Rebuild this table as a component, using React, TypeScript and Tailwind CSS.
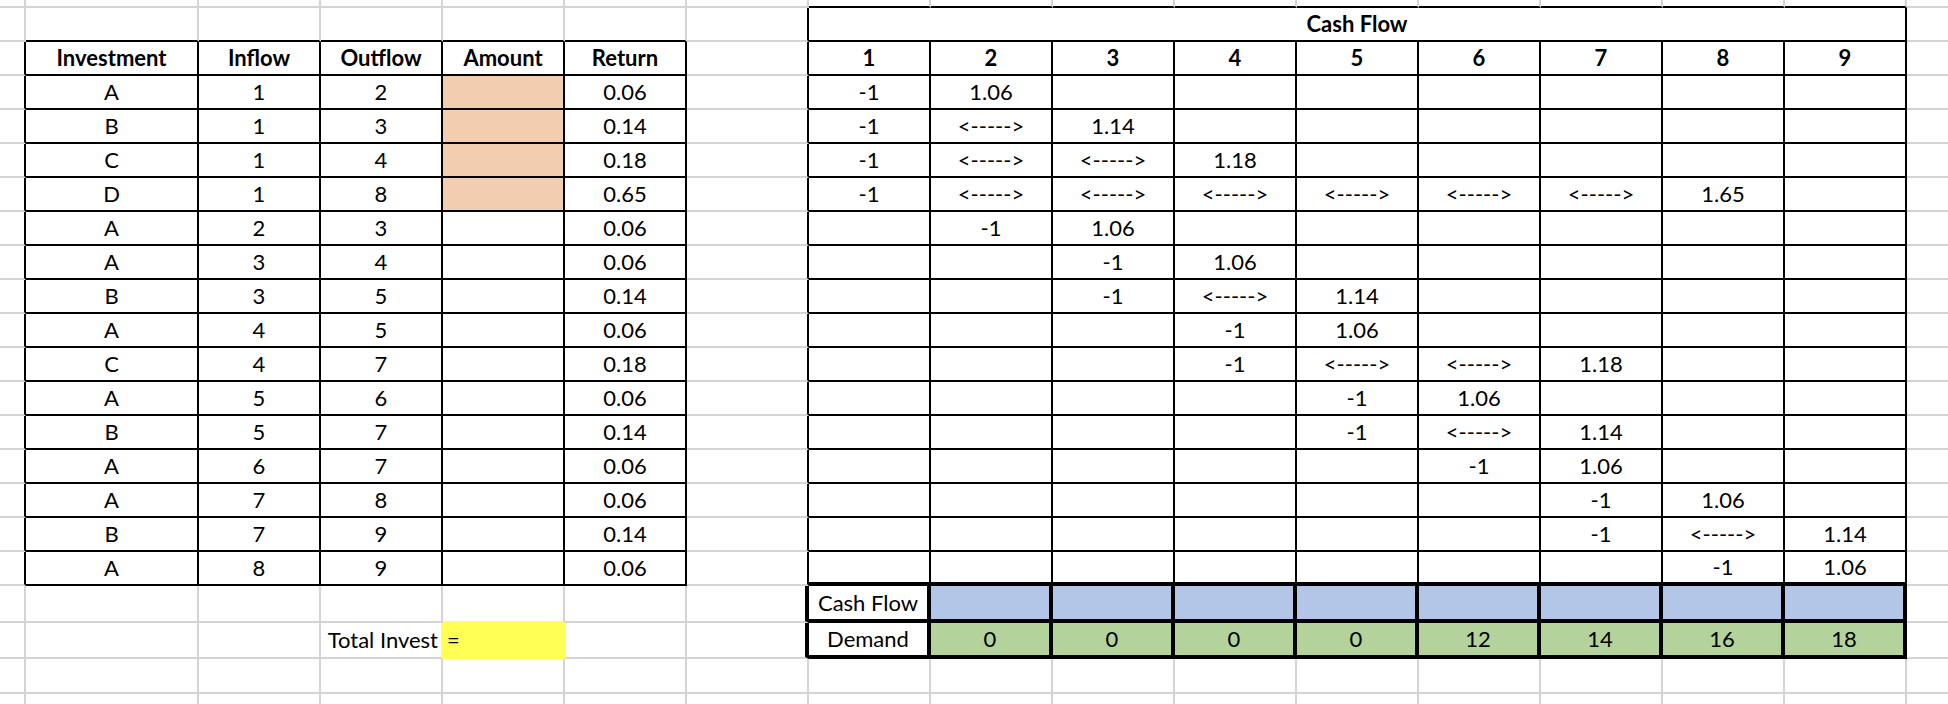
import React from "react"

type Line = "g" | "k" | "K" | "y" | "n"

const RIGHT: Record<Line, string> = {
  g: "border-r-2 border-r-[#d4d4d4]",
  k: "border-r-2 border-r-black",
  K: "border-r-4 border-r-black",
  y: "border-r-2 border-r-[#ffff55]",
  n: "",
}

const BOTTOM: Record<Line, string> = {
  g: "border-b-2 border-b-[#d4d4d4]",
  k: "border-b-2 border-b-black",
  K: "border-b-4 border-b-black",
  y: "border-b-2 border-b-[#ffff55]",
  n: "",
}

const investments: [string, number, number, string][] = [
  ["A", 1, 2, "0.06"],
  ["B", 1, 3, "0.14"],
  ["C", 1, 4, "0.18"],
  ["D", 1, 8, "0.65"],
  ["A", 2, 3, "0.06"],
  ["A", 3, 4, "0.06"],
  ["B", 3, 5, "0.14"],
  ["A", 4, 5, "0.06"],
  ["C", 4, 7, "0.18"],
  ["A", 5, 6, "0.06"],
  ["B", 5, 7, "0.14"],
  ["A", 6, 7, "0.06"],
  ["A", 7, 8, "0.06"],
  ["B", 7, 9, "0.14"],
  ["A", 8, 9, "0.06"],
]

const demand = [0, 0, 0, 0, 12, 14, 16, 18]

const ROWS = 22
const COLS = 17

type CellSpec = {
  text?: string
  bold?: boolean
  align?: "left" | "center" | "right"
  bg?: string
  span?: boolean
  skip?: boolean
  right: Line
  bottom: Line
}

const inLeft = (c: number) => c >= 1 && c <= 5
const inRight = (c: number) => c >= 7 && c <= 15

function spec(r: number, c: number): CellSpec {
  // grid lines, each cell owns its right and bottom edge
  let right: Line = "g"
  if (c === 16) right = "n"
  else if (r >= 2 && r <= 17 && c <= 5) right = "k"
  else if (r >= 1 && r <= 17 && c >= 6 && c <= 15) right = "k"
  else if ((r === 18 || r === 19) && c >= 6 && c <= 15) right = "K"

  let bottom: Line = "g"
  if (r === 21) bottom = "n"
  else if (r === 0 && inRight(c)) bottom = "k"
  else if (r >= 1 && r <= 16 && (inLeft(c) || inRight(c))) bottom = "k"
  else if (r === 17 && inLeft(c)) bottom = "k"
  else if (r >= 17 && r <= 19 && inRight(c)) bottom = "K"

  const s: CellSpec = { right, bottom }

  if (r === 1 && c === 7) {
    s.text = "Cash Flow"
    s.bold = true
    s.span = true
  }
  if (r === 1 && c > 7 && c <= 15) s.skip = true

  if (r === 2) {
    const heads = ["Investment", "Inflow", "Outflow", "Amount", "Return"]
    if (inLeft(c)) s.text = heads[c - 1]
    if (inRight(c)) s.text = String(c - 6)
    s.bold = true
  }

  if (r >= 3 && r <= 17) {
    const [name, inflow, outflow, ret] = investments[r - 3]
    if (c === 1) s.text = name
    if (c === 2) s.text = String(inflow)
    if (c === 3) s.text = String(outflow)
    if (c === 4 && r < 7) s.bg = "bg-[#f3cdb0]"
    if (c === 5) s.text = ret
    if (inRight(c)) {
      const k = c - 6
      if (k === inflow) s.text = "-1"
      else if (k > inflow && k < outflow) s.text = "<----->"
      else if (k === outflow) s.text = (1 + parseFloat(ret)).toFixed(2)
    }
  }

  if (r === 18) {
    if (c === 7) s.text = "Cash Flow"
    if (c > 7 && c <= 15) s.bg = "bg-[#b4c6e7]"
    if (c === 4) s.bottom = "y"
  }

  if (r === 19) {
    if (c === 3) {
      s.text = "Total Invest"
      s.align = "right"
      s.right = "y"
    }
    if (c === 4) {
      s.text = "="
      s.align = "left"
      s.bg = "bg-[#ffff55]"
      s.right = "y"
      s.bottom = "y"
    }
    if (c === 7) s.text = "Demand"
    if (c > 7 && c <= 15) {
      s.bg = "bg-[#b4d29c]"
      s.text = String(demand[c - 8])
    }
  }

  return s
}

function Cell({ s }: { s: CellSpec }) {
  const justify =
    s.align === "right" ? "justify-end pr-[3px]" : s.align === "left" ? "justify-start pl-[4px]" : "justify-center"
  return (
    <div
      className={`flex items-center whitespace-nowrap ${justify} ${RIGHT[s.right]} ${BOTTOM[s.bottom]} ${
        s.bg ?? ""
      } ${s.bold ? "font-bold" : ""} ${s.span ? "col-span-9" : ""}`}
    >
      {s.text}
    </div>
  )
}

export default function App() {
  const cells: React.ReactNode[] = []
  for (let r = 0; r < ROWS; r++) {
    for (let c = 0; c < COLS; c++) {
      const s = spec(r, c)
      if (s.skip) continue
      cells.push(<Cell key={`${r}-${c}`} s={s} />)
    }
  }

  return (
    <div className="w-full h-[704px] overflow-hidden bg-white text-black text-[22px] leading-none font-['Lato',sans-serif]">
      <div className="grid h-full grid-cols-[26px_173px_repeat(14,122px)_1fr] grid-rows-[8px_repeat(17,34px)_37px_36px_35px_1fr]">
        {cells}
      </div>
    </div>
  )
}
